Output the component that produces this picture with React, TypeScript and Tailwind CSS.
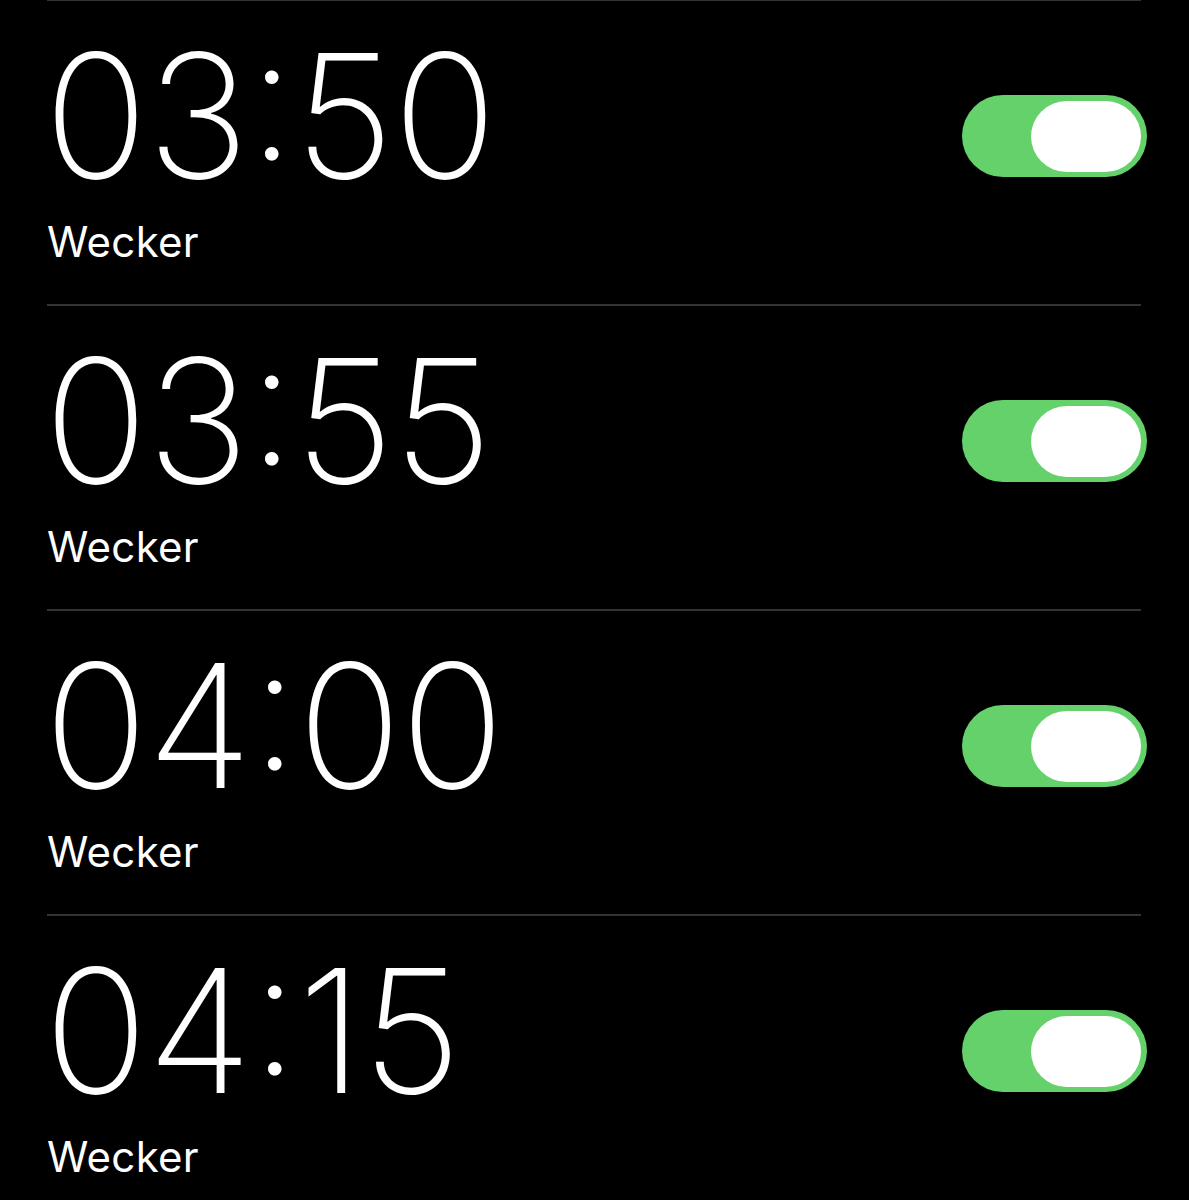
import React, { useState } from 'react'

type Alarm = {
  id: number
  time: string
  label: string
  enabled: boolean
}

const INITIAL_ALARMS: Alarm[] = [
  { id: 1, time: '03:50', label: 'Wecker', enabled: true },
  { id: 2, time: '03:55', label: 'Wecker', enabled: true },
  { id: 3, time: '04:00', label: 'Wecker', enabled: true },
  { id: 4, time: '04:15', label: 'Wecker', enabled: true },
]

const Toggle: React.FC<{ on: boolean; onChange: () => void }> = ({ on, onChange }) => (
  <button
    onClick={onChange}
    role="switch"
    aria-checked={on}
    className={`flex h-[82px] w-[185px] items-center rounded-full p-[6px] ${
      on ? 'justify-end bg-[#65d16b]' : 'justify-start bg-[#39393d]'
    }`}
  >
    <span className="block h-[71px] w-[110px] rounded-full bg-white" />
  </button>
)

export default function App() {
  const [alarms, setAlarms] = useState(INITIAL_ALARMS)

  const toggle = (id: number) =>
    setAlarms((list) => list.map((a) => (a.id === id ? { ...a, enabled: !a.enabled } : a)))

  return (
    <div className="min-h-[1200px] overflow-hidden bg-black pl-[47px] pr-[48px] text-white [font-family:Inter,'Liberation_Sans',sans-serif]">
      <div className="-mt-[1px]">
        {alarms.map((alarm) => (
          <div
            key={alarm.id}
            className="flex h-[305px] items-start justify-between border-t-2 border-[#333335]"
          >
            <div className="flex flex-col">
              {/* 'case' lifts the colon to sit centred between the digits */}
              <span className="-ml-[3px] mt-[28px] text-[172px] font-extralight leading-[172px] tracking-[-1px] [font-feature-settings:'case']">
                {alarm.time}
              </span>
              <span className="mt-[20px] text-[42px] leading-[42px] tracking-[0.3px]">
                {alarm.label}
              </span>
            </div>
            <div className="mt-[94px] -mr-[6px]">
              <Toggle on={alarm.enabled} onChange={() => toggle(alarm.id)} />
            </div>
          </div>
        ))}
      </div>
    </div>
  )
}
